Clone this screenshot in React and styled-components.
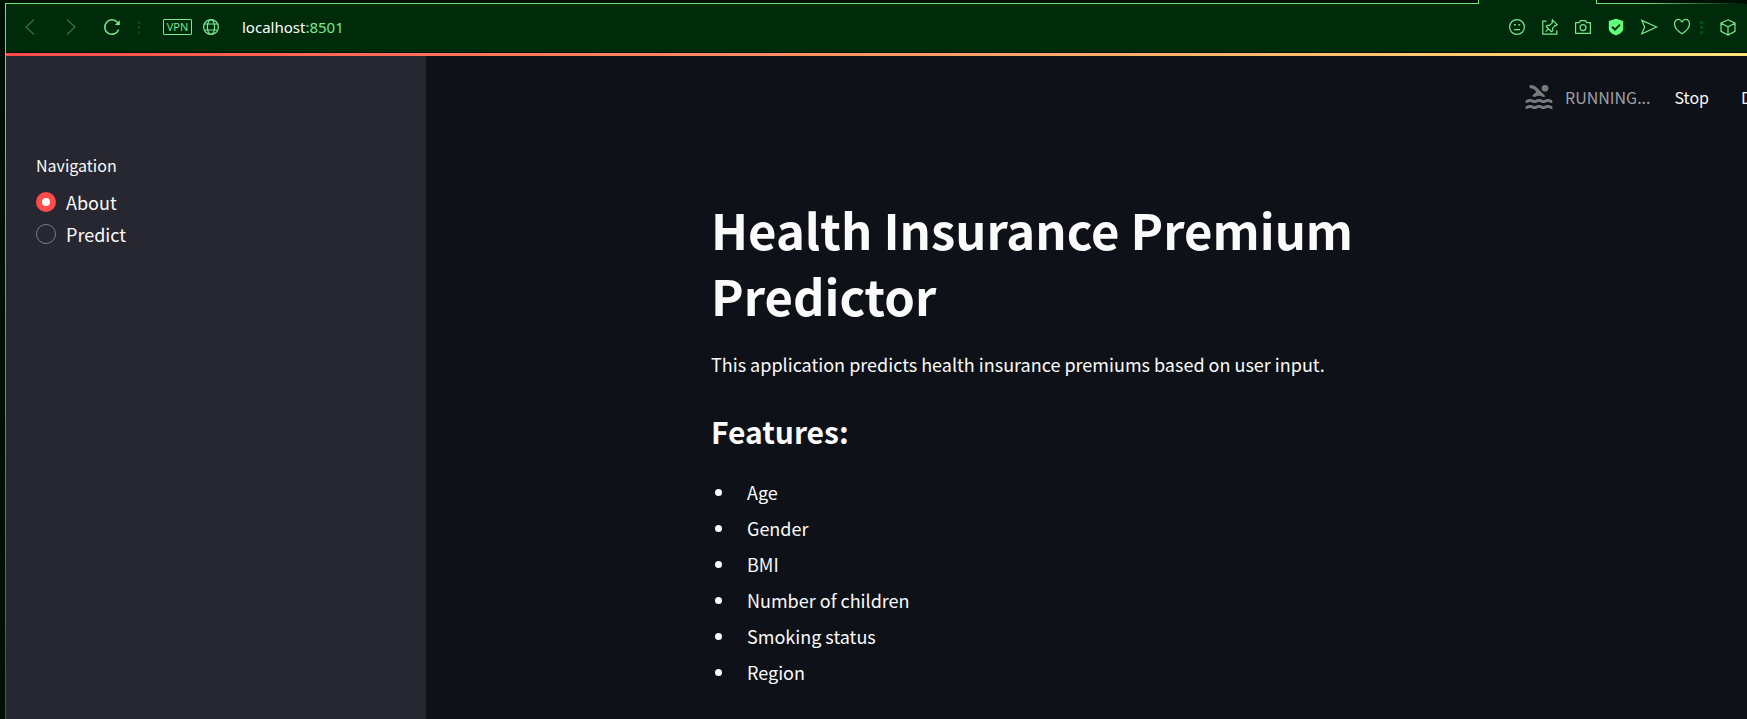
import React, { useState } from 'react';
import styled, { createGlobalStyle } from 'styled-components';
import { MdPool } from 'react-icons/md';

const GlobalStyle = createGlobalStyle`
  *, *::before, *::after { box-sizing: border-box; }
  body {
    margin: 0;
    background: #0e1117;
    color: #fafafa;
    font-family: "Noto Sans CJK JP", "Noto Sans", sans-serif;
    font-size: 18px;
  }
  button { font: inherit; color: inherit; background: none; border: 0; padding: 0; cursor: pointer; }
`;

const Window = styled.div`
  display: flex;
  flex-direction: column;
  min-height: 100vh;
  padding-left: 5px;
  background: #001004;
  overflow: hidden;
`;

const TabStrip = styled.div`
  display: flex;
  height: 4px;
  background: #002b0a;
`;

const TabsBefore = styled.div`
  flex: 1;
  background: #001004;
  border: solid #6be878;
  border-width: 0 1px 1px 0;
`;

const TabsAfter = styled.div`
  width: 151px;
  margin-left: 117px;
  padding: 0 0 1px 1px;
  background: linear-gradient(90deg, #6be878, #6be878 30%, #001004);
  &::before { content: ""; display: block; height: 3px; background: #001004; }
`;

const Viewport = styled.div`
  flex: 1;
  display: flex;
  flex-direction: column;
  padding-left: 1px;
  background: linear-gradient(#6be878, #1f6a2d);
`;

const Toolbar = styled.header`
  display: flex;
  align-items: center;
  justify-content: space-between;
  height: 49px;
  padding: 0 11px 2px 16px;
  background: #002b0a;
  border-bottom: 1px solid #001004;
  color: #7be892;
`;

const Group = styled.div`
  display: flex;
  align-items: center;
  gap: ${(p) => p.$gap}px;
`;

const IconButton = styled.button`
  display: flex;
  width: 16px;
  height: 16px;
  opacity: ${(p) => (p.$dim ? 0.4 : 1)};
  svg { width: 16px; height: 16px; overflow: visible; }
`;

const Dots = styled.span`
  width: ${(p) => p.$width}px;
  height: 13px;
  background: repeating-linear-gradient(#005016 0 3px, transparent 3px 5px);
`;

const VpnBadge = styled.button`
  && {
    width: 29px;
    height: 16px;
    border: 1px solid #7be892;
    border-radius: 1px;
    font: 11px/14px "Open Sans", sans-serif;
  }
`;

const Address = styled.a`
  margin-left: 5px;
  color: #7be892;
  font: 15px/24px "Noto Sans", "Open Sans", sans-serif;
  text-decoration: none;
  span { color: #fff; }
`;

const Loading = styled.div`
  height: 3px;
  background: linear-gradient(90deg, #ff4b4b, #ffe57a);
`;

const Page = styled.div`
  flex: 1;
  display: flex;
  background: #0e1117;
`;

const Sidebar = styled.aside`
  flex: 0 0 420px;
  padding: 97px 30px 30px;
  background: #262730;
`;

const RadioGroup = styled.fieldset`
  margin: 0;
  padding: 0;
  border: 0;
  legend { padding: 0; margin-bottom: 9px; font-size: 16px; line-height: 24px; }
`;

const Option = styled.label`
  display: flex;
  align-items: center;
  gap: 10px;
  line-height: 32px;
  cursor: pointer;
`;

const Radio = styled.input`
  appearance: none;
  width: 20px;
  height: 20px;
  margin: 0;
  border: 1px solid #7b7c85;
  border-radius: 50%;
  &:checked { border: 6px solid #ff4b4b; background: #fafafa; }
`;

const Main = styled.main`
  flex: 1;
  min-width: 0;
`;

const StatusBar = styled.div`
  display: flex;
  align-items: center;
  justify-content: flex-end;
  height: 84px;
  padding-bottom: 2px;
  font-size: 16px;
  line-height: 24px;
  overflow: hidden;
`;

const Status = styled.span`
  display: flex;
  align-items: center;
  gap: 10px;
  margin-right: 24px;
  color: #9fa1a8;
  svg { width: 32px; height: 32px; color: #7a7b7e; }
`;

const ClippedButton = styled.button`
  flex: 0 0 6px;
  margin-left: 32px;
  overflow: hidden;
  text-align: left;
`;

const Columns = styled.div`
  display: grid;
  grid-template-columns: minmax(20px, 285fr) minmax(0, 1036fr);
`;

const Article = styled.article`
  grid-column: 2;
  max-width: 860px;
  padding: 56px 0 22px;
`;

const Title = styled.h1`
  margin: 0 0 20px;
  font-size: 49px;
  line-height: 66px;
`;

const Intro = styled.p`
  margin: 0 0 30px;
  line-height: 32px;
`;

const Heading = styled.h2`
  margin: 0 0 22px;
  font-size: 30px;
  font-weight: 600;
  line-height: 42px;
`;

const FeatureList = styled.ul`
  margin: 0;
  padding: 0;
  list-style: none;
`;

const Feature = styled.li`
  display: flex;
  align-items: center;
  gap: 25px;
  padding-left: 4px;
  line-height: 36px;
  &::before { content: ""; width: 7px; height: 7px; border-radius: 50%; background: #fafafa; }
`;

const Icon = ({ children }) => (
  <svg viewBox="0 0 16 16" fill="none" stroke="currentColor" strokeWidth="1.2" aria-hidden="true">{children}</svg>
);

const features = ['Age', 'Gender', 'BMI', 'Number of children', 'Smoking status', 'Region'];

export default function App() {
  const [page, setPage] = useState('About');
  return (
    <Window>
      <GlobalStyle />
      <TabStrip><TabsBefore /><TabsAfter /></TabStrip>
      <Viewport>
        <Toolbar>
          <Group $gap={18}>
            <Group $gap={25}>
              <IconButton $dim aria-label="Back"><Icon><path d="M12 0.5 4 8l8 7.5" /></Icon></IconButton>
              <IconButton $dim aria-label="Forward"><Icon><path d="M4 0.5 12 8l-8 7.5" /></Icon></IconButton>
              <IconButton aria-label="Reload">
                <Icon>
                  <path d="M14.7 10.5A7.2 7.2 0 1 1 13.5 3.5" strokeWidth="1.5" />
                  <path d="M15.8 1.3V6h-5z" fill="currentColor" stroke="none" />
                </Icon>
              </IconButton>
            </Group>
            <Group $gap={23}>
              <Dots $width={2} />
              <Group $gap={11}>
                <VpnBadge>VPN</VpnBadge>
                <IconButton aria-label="Site information">
                  <Icon><circle cx="8" cy="8" r="7.4" /><ellipse cx="8" cy="8" rx="3.6" ry="7.4" /><path d="M1.4 5h13.2M1.4 11h13.2" /></Icon>
                </IconButton>
              </Group>
            </Group>
            <Address href="#"><span>localhost</span>:8501</Address>
          </Group>
          <Group $gap={10}>
            <Group $gap={17}>
              <IconButton aria-label="Aria">
                <Icon><circle cx="8" cy="8" r="7.4" /><path d="M5 5.8h1.8M9.4 5.8h1.8M5 10.6h6" strokeWidth="1.4" /></Icon>
              </IconButton>
              <IconButton aria-label="Pin page">
                <Icon>
                  <path d="M4.5 2.2H.8v13h14v-3.8" />
                  <path d="M10.4.8l4.8 4.8-1.3 1-.8-.2-2.6 3 .1 2.3-1.2 1-5.2-5.2 1.1-1.2 2.2.1 3-2.8-.4-1zM6.7 9.6 3.6 12.6" />
                </Icon>
              </IconButton>
              <IconButton aria-label="Snapshot">
                <Icon><path d="M.6 3.6h3.6l1.3-2h5l1.3 2h3.6v10.800H.6z" strokeLinejoin="round" /><circle cx="8" cy="8.6" r="3" /></Icon>
              </IconButton>
              <IconButton aria-label="Ad blocker">
                <Icon>
                  <path d="M8-.3 15.2 2v7.5c0 3.200-3.200 5.400-7.200 7-4-1.600-7.200-3.800-7.200-7V2z" fill="#62ff7c" stroke="none" />
                  <path d="M4 7.8l3 2.8 5-5" stroke="#002b0a" strokeWidth="2" />
                </Icon>
              </IconButton>
              <IconButton aria-label="Send">
                <Icon><path d="M.8 1.4 15.6 8 .8 14.8 3.7 8z" /></Icon>
              </IconButton>
              <IconButton aria-label="Favourites">
                <Icon><path d="M8 3C6.9 1 5.8.4 4.4.4 2.2.4.5 2.3.5 4.7.5 8.7 3.6 12 8 14.8c4.4-2.8 7.5-6.1 7.5-10.1C15.5 2.3 13.8.4 11.6.4 10.2.4 9.100 1 8 3z" /></Icon>
              </IconButton>
            </Group>
            <Group $gap={17}>
              <Dots $width={3} />
              <IconButton aria-label="Extensions">
                <Icon><path d="M8 .8l7 3.4v8.2L8 16l-7-3.600V4.200zM1 4.200l7 3.600 7-3.600M8 7.800V16" /></Icon>
              </IconButton>
            </Group>
          </Group>
        </Toolbar>
        <Loading />
        <Page>
          <Sidebar>
            <RadioGroup>
              <legend>Navigation</legend>
              {['About', 'Predict'].map((name) => (
                <Option key={name}>
                  <Radio type="radio" name="page" checked={page === name} onChange={() => setPage(name)} />
                  {name}
                </Option>
              ))}
            </RadioGroup>
          </Sidebar>
          <Main>
            <StatusBar>
              <Status><MdPool />RUNNING...</Status>
              <button>Stop</button>
              <ClippedButton>Deploy</ClippedButton>
            </StatusBar>
            <Columns>
              <Article>
                <Title>Health Insurance Premium Predictor</Title>
                <Intro>This application predicts health insurance premiums based on user input.</Intro>
                <Heading>Features:</Heading>
                <FeatureList>
                  {features.map((name) => <Feature key={name}>{name}</Feature>)}
                </FeatureList>
              </Article>
            </Columns>
          </Main>
        </Page>
      </Viewport>
    </Window>
  );
}
